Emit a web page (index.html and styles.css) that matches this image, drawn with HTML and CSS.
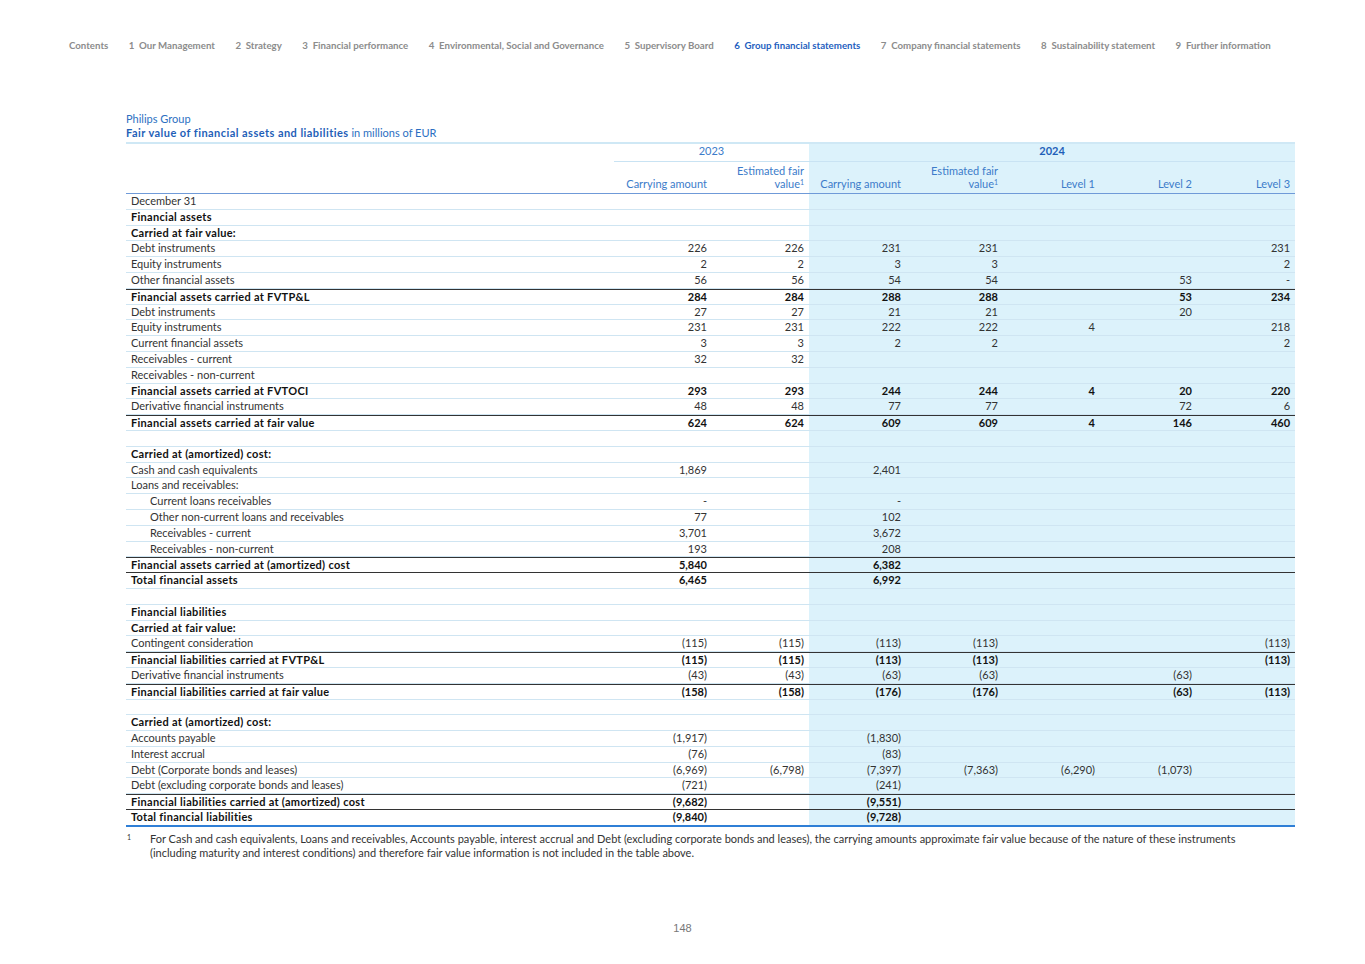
FILE: index.html
```html
<!DOCTYPE html>
<html lang="en">
<head>
<meta charset="utf-8">
<title>Fair value of financial assets and liabilities</title>
<link rel="stylesheet" href="styles.css">
</head>
<body>
<nav class="nav">
  <a class="nav-item">Contents</a>
  <a class="nav-item">1&nbsp; Our Management</a>
  <a class="nav-item">2&nbsp; Strategy</a>
  <a class="nav-item">3&nbsp; Financial performance</a>
  <a class="nav-item">4&nbsp; Environmental, Social and Governance</a>
  <a class="nav-item">5&nbsp; Supervisory Board</a>
  <a class="nav-item active">6&nbsp; Group financial statements</a>
  <a class="nav-item">7&nbsp; Company financial statements</a>
  <a class="nav-item">8&nbsp; Sustainability statement</a>
  <a class="nav-item">9&nbsp; Further information</a>
</nav>
<main class="page">
  <div class="caption">
    <div class="org">Philips Group</div>
    <div class="title"><b>Fair value of financial assets and liabilities</b> in millions of EUR</div>
  </div>
  <table class="fv">
    <colgroup>
      <col class="c-label"><col class="c-n1"><col class="c-n"><col class="c-n"><col class="c-n"><col class="c-n"><col class="c-n"><col class="c-n1">
    </colgroup>
    <thead>
      <tr class="yr">
        <th class="lbl"></th>
        <th colspan="2" class="y23">2023</th>
        <th colspan="5" class="y24">2024</th>
      </tr>
      <tr class="hd">
        <th class="lbl"></th>
        <th>Carrying amount</th>
        <th>Estimated fair<br>value<sup>1</sup></th>
        <th class="b">Carrying amount</th>
        <th class="b">Estimated fair<br>value<sup>1</sup></th>
        <th class="b">Level 1</th>
        <th class="b">Level 2</th>
        <th class="b">Level 3</th>
      </tr>
    </thead>
    <tbody>
      <tr><td class="lbl">December 31</td><td></td><td></td><td class="b"></td><td class="b"></td><td class="b"></td><td class="b"></td><td class="b"></td></tr>
      <tr class="bold"><td class="lbl">Financial assets</td><td></td><td></td><td class="b"></td><td class="b"></td><td class="b"></td><td class="b"></td><td class="b"></td></tr>
      <tr class="bold"><td class="lbl">Carried at fair value:</td><td></td><td></td><td class="b"></td><td class="b"></td><td class="b"></td><td class="b"></td><td class="b"></td></tr>
      <tr><td class="lbl">Debt instruments</td><td>226</td><td>226</td><td class="b">231</td><td class="b">231</td><td class="b"></td><td class="b"></td><td class="b">231</td></tr>
      <tr><td class="lbl">Equity instruments</td><td>2</td><td>2</td><td class="b">3</td><td class="b">3</td><td class="b"></td><td class="b"></td><td class="b">2</td></tr>
      <tr><td class="lbl">Other financial assets</td><td>56</td><td>56</td><td class="b">54</td><td class="b">54</td><td class="b"></td><td class="b">53</td><td class="b">-</td></tr>
      <tr class="bold sum"><td class="lbl">Financial assets carried at FVTP&amp;L</td><td>284</td><td>284</td><td class="b">288</td><td class="b">288</td><td class="b"></td><td class="b">53</td><td class="b">234</td></tr>
      <tr><td class="lbl">Debt instruments</td><td>27</td><td>27</td><td class="b">21</td><td class="b">21</td><td class="b"></td><td class="b">20</td><td class="b"></td></tr>
      <tr><td class="lbl">Equity instruments</td><td>231</td><td>231</td><td class="b">222</td><td class="b">222</td><td class="b">4</td><td class="b"></td><td class="b">218</td></tr>
      <tr><td class="lbl">Current financial assets</td><td>3</td><td>3</td><td class="b">2</td><td class="b">2</td><td class="b"></td><td class="b"></td><td class="b">2</td></tr>
      <tr><td class="lbl">Receivables - current</td><td>32</td><td>32</td><td class="b"></td><td class="b"></td><td class="b"></td><td class="b"></td><td class="b"></td></tr>
      <tr><td class="lbl">Receivables - non-current</td><td></td><td></td><td class="b"></td><td class="b"></td><td class="b"></td><td class="b"></td><td class="b"></td></tr>
      <tr class="bold"><td class="lbl">Financial assets carried at FVTOCI</td><td>293</td><td>293</td><td class="b">244</td><td class="b">244</td><td class="b">4</td><td class="b">20</td><td class="b">220</td></tr>
      <tr><td class="lbl">Derivative financial instruments</td><td>48</td><td>48</td><td class="b">77</td><td class="b">77</td><td class="b"></td><td class="b">72</td><td class="b">6</td></tr>
      <tr class="bold sum"><td class="lbl">Financial assets carried at fair value</td><td>624</td><td>624</td><td class="b">609</td><td class="b">609</td><td class="b">4</td><td class="b">146</td><td class="b">460</td></tr>
      <tr><td class="lbl"></td><td></td><td></td><td class="b"></td><td class="b"></td><td class="b"></td><td class="b"></td><td class="b"></td></tr>
      <tr class="bold"><td class="lbl">Carried at (amortized) cost:</td><td></td><td></td><td class="b"></td><td class="b"></td><td class="b"></td><td class="b"></td><td class="b"></td></tr>
      <tr><td class="lbl">Cash and cash equivalents</td><td>1,869</td><td></td><td class="b">2,401</td><td class="b"></td><td class="b"></td><td class="b"></td><td class="b"></td></tr>
      <tr><td class="lbl">Loans and receivables:</td><td></td><td></td><td class="b"></td><td class="b"></td><td class="b"></td><td class="b"></td><td class="b"></td></tr>
      <tr><td class="lbl ind">Current loans receivables</td><td>-</td><td></td><td class="b">-</td><td class="b"></td><td class="b"></td><td class="b"></td><td class="b"></td></tr>
      <tr><td class="lbl ind">Other non-current loans and receivables</td><td>77</td><td></td><td class="b">102</td><td class="b"></td><td class="b"></td><td class="b"></td><td class="b"></td></tr>
      <tr><td class="lbl ind">Receivables - current</td><td>3,701</td><td></td><td class="b">3,672</td><td class="b"></td><td class="b"></td><td class="b"></td><td class="b"></td></tr>
      <tr><td class="lbl ind">Receivables - non-current</td><td>193</td><td></td><td class="b">208</td><td class="b"></td><td class="b"></td><td class="b"></td><td class="b"></td></tr>
      <tr class="bold sum"><td class="lbl">Financial assets carried at (amortized) cost</td><td>5,840</td><td></td><td class="b">6,382</td><td class="b"></td><td class="b"></td><td class="b"></td><td class="b"></td></tr>
      <tr class="bold sum"><td class="lbl">Total financial assets</td><td>6,465</td><td></td><td class="b">6,992</td><td class="b"></td><td class="b"></td><td class="b"></td><td class="b"></td></tr>
      <tr><td class="lbl"></td><td></td><td></td><td class="b"></td><td class="b"></td><td class="b"></td><td class="b"></td><td class="b"></td></tr>
      <tr class="bold"><td class="lbl">Financial liabilities</td><td></td><td></td><td class="b"></td><td class="b"></td><td class="b"></td><td class="b"></td><td class="b"></td></tr>
      <tr class="bold"><td class="lbl">Carried at fair value:</td><td></td><td></td><td class="b"></td><td class="b"></td><td class="b"></td><td class="b"></td><td class="b"></td></tr>
      <tr><td class="lbl">Contingent consideration</td><td>(115)</td><td>(115)</td><td class="b">(113)</td><td class="b">(113)</td><td class="b"></td><td class="b"></td><td class="b">(113)</td></tr>
      <tr class="bold sum"><td class="lbl">Financial liabilities carried at FVTP&amp;L</td><td>(115)</td><td>(115)</td><td class="b">(113)</td><td class="b">(113)</td><td class="b"></td><td class="b"></td><td class="b">(113)</td></tr>
      <tr><td class="lbl">Derivative financial instruments</td><td>(43)</td><td>(43)</td><td class="b">(63)</td><td class="b">(63)</td><td class="b"></td><td class="b">(63)</td><td class="b"></td></tr>
      <tr class="bold sum"><td class="lbl">Financial liabilities carried at fair value</td><td>(158)</td><td>(158)</td><td class="b">(176)</td><td class="b">(176)</td><td class="b"></td><td class="b">(63)</td><td class="b">(113)</td></tr>
      <tr><td class="lbl"></td><td></td><td></td><td class="b"></td><td class="b"></td><td class="b"></td><td class="b"></td><td class="b"></td></tr>
      <tr class="bold"><td class="lbl">Carried at (amortized) cost:</td><td></td><td></td><td class="b"></td><td class="b"></td><td class="b"></td><td class="b"></td><td class="b"></td></tr>
      <tr><td class="lbl">Accounts payable</td><td>(1,917)</td><td></td><td class="b">(1,830)</td><td class="b"></td><td class="b"></td><td class="b"></td><td class="b"></td></tr>
      <tr><td class="lbl">Interest accrual</td><td>(76)</td><td></td><td class="b">(83)</td><td class="b"></td><td class="b"></td><td class="b"></td><td class="b"></td></tr>
      <tr><td class="lbl">Debt (Corporate bonds and leases)</td><td>(6,969)</td><td>(6,798)</td><td class="b">(7,397)</td><td class="b">(7,363)</td><td class="b">(6,290)</td><td class="b">(1,073)</td><td class="b"></td></tr>
      <tr><td class="lbl">Debt (excluding corporate bonds and leases)</td><td>(721)</td><td></td><td class="b">(241)</td><td class="b"></td><td class="b"></td><td class="b"></td><td class="b"></td></tr>
      <tr class="bold sum"><td class="lbl">Financial liabilities carried at (amortized) cost</td><td>(9,682)</td><td></td><td class="b">(9,551)</td><td class="b"></td><td class="b"></td><td class="b"></td><td class="b"></td></tr>
      <tr class="bold sum last"><td class="lbl">Total financial liabilities</td><td>(9,840)</td><td></td><td class="b">(9,728)</td><td class="b"></td><td class="b"></td><td class="b"></td><td class="b"></td></tr>
    </tbody>
  </table>
  <div class="foot">
    <span class="fn">1</span>
    <p>For Cash and cash equivalents, Loans and receivables, Accounts payable, interest accrual and Debt (excluding corporate bonds and leases), the carrying amounts approximate fair value because of the nature of these instruments (including maturity and interest conditions) and therefore fair value information is not included in the table above.</p>
  </div>
</main>
<footer class="pnum">148</footer>
</body>
</html>
```

FILE: styles.css
```css
html, body {
  margin: 0;
  padding: 0;
  background: #ffffff;
}
body {
  font-family: Lato, "Open Sans", sans-serif;
  color: #333333;
  width: 1365px;
  height: 964px;
  position: relative;
}
.nav {
  display: flex;
  gap: 20.5px;
  padding: 39px 0 0 69px;
  font-size: 9.7px;
  line-height: 12px;
  font-weight: 700;
  color: #8c8c8c;
  white-space: nowrap;
}
.nav-item { color: #8c8c8c; }
.nav-item.active { color: #1f5fc0; }

.page {
  margin: 61px 0 0 126px;
  width: 1169px;
}
.caption {
  color: #2c6fc2;
  font-size: 11px;
  line-height: 14px;
  font-weight: 400;
  padding-bottom: 2px;
}
.caption b {
  font-weight: 700;
  color: #1f5fb8;
  letter-spacing: 0.45px;
}

.fv {
  width: 1169px;
  table-layout: fixed;
  border-collapse: separate;
  border-spacing: 0;
  font-size: 11px;
  font-weight: 400;
}
.c-label { width: 488px; }
.c-n { width: 97px; }
.c-n1 { width: 98px; }

.fv th, .fv td {
  padding: 0 5px;
  text-align: right;
  white-space: nowrap;
}
.fv .lbl { text-align: left; }
.fv .ind { padding-left: 24px; }

.fv thead th {
  font-weight: 400;
  color: #3c7cca;
}
.fv .yr th {
  border-top: 2px solid #cfe8f5;
  height: 14px;
  line-height: 14px;
  padding: 0 0 3px;
  text-align: center;
}
.fv .yr .y23, .fv .yr .y24 {
  border-bottom: 1px solid #c9e3f3;
}
.fv .yr .y24 {
  background: #dcf2fb;
  font-weight: 700;
  color: #1f5fb8;
}
.fv .hd th {
  vertical-align: bottom;
  line-height: 13px;
  padding-top: 2px;
  padding-bottom: 3px;
  border-bottom: 1px solid #6f9ad8;
  height: 23px;
}
.fv sup {
  font-size: 7px;
  line-height: 0;
  vertical-align: 3px;
}
.fv .b { background: #dcf2fb; }

.fv tbody td {
  height: 14.8px;
  line-height: 14.8px;
  border-bottom: 1px solid #cfe5f2;
  color: #333333;
}
.fv tbody .bold td {
  font-weight: 700;
  color: #111111;
}
.fv tbody .bold td.lbl {
  letter-spacing: 0.3px;
}
.fv tbody .sum td {
  border-top: 1px solid #333333;
  height: 13.8px;
  line-height: 13.8px;
}
.fv tbody .sum + .sum td {
  border-top: none;
  height: 14.8px;
  line-height: 14.8px;
}
.fv tbody tr.sum:has(+ .sum) td { border-bottom: 1px solid #333333; }
.fv tbody .last td {
  border-bottom: 2px solid #2f7fd6;
  height: 13.8px;
  line-height: 13.8px;
}

.foot {
  display: flex;
  margin-top: 5px;
  font-size: 11px;
  font-weight: 400;
  line-height: 14px;
  color: #333333;
}
.foot .fn {
  width: 23px;
  flex: none;
  font-size: 7px;
  line-height: 10px;
  padding-left: 1px;
}
.foot p {
  margin: 0;
  width: 1110px;
}

.pnum {
  position: absolute;
  left: 0;
  right: 0;
  top: 921px;
  text-align: center;
  font-family: "Liberation Sans", Arial, sans-serif;
  font-size: 11px;
  line-height: 14px;
  color: #777777;
}
```
